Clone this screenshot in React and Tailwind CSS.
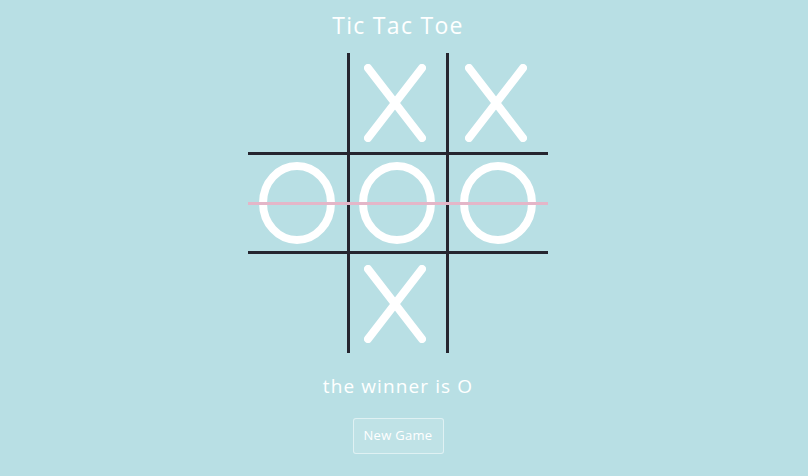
import React from 'react';

const board = ['', 'X', 'X', 'O', 'O', 'O', '', 'X', ''];
const colW = ['w-[102px]', 'w-[99px]', 'w-[99px]'];
const rowH = ['h-[102px]', 'h-[99px]', 'h-[99px]'];

function MarkX() {
  return (
    <svg width="62" height="78" viewBox="0 0 62 78" className="-translate-x-[3px]">
      <line x1="4" y1="4" x2="58" y2="74" stroke="white" strokeWidth="8" strokeLinecap="round" />
      <line x1="58" y1="4" x2="4" y2="74" stroke="white" strokeWidth="8" strokeLinecap="round" />
    </svg>
  );
}

function MarkO() {
  return (
    <svg width="76" height="82" viewBox="0 0 76 82" className="-translate-x-[1px]">
      <ellipse cx="38" cy="41" rx="34" ry="37" fill="none" stroke="white" strokeWidth="8" />
    </svg>
  );
}

function Cell({ value, index }) {
  const col = index % 3;
  const row = Math.floor(index / 3);
  const right = col < 2 ? 'border-r-[3px]' : '';
  const bottom = row < 2 ? 'border-b-[3px]' : '';
  return (
    <div
      className={`${colW[col]} ${rowH[row]} ${right} ${bottom} border-[#25252f] flex items-center justify-center`}
    >
      {value === 'X' && <MarkX />}
      {value === 'O' && <MarkO />}
    </div>
  );
}

export default function App() {
  return (
    <div
      className="w-full h-[476px] bg-[#b8dfe4] flex flex-col items-center pr-[12px] text-white"
      style={{ fontFamily: '"Open Sans", "Liberation Sans", sans-serif' }}
    >
      <div className="h-[53px] flex items-center justify-center">
        <h1 className="text-[23px] leading-[28px] tracking-[1.3px] -translate-y-[2px]">Tic Tac Toe</h1>
      </div>

      <div className="relative w-[300px] h-[300px] flex flex-wrap">
        {board.map((v, i) => (
          <Cell key={i} value={v} index={i} />
        ))}
        <div className="absolute left-0 right-0 top-[149px] h-[3px] bg-[#e4b6c8]" />
      </div>

      <p className="mt-[21px] text-[19px] leading-[24px] tracking-[1.1px]">the winner is O</p>

      <button className="mt-[20px] w-[91px] h-[36px] rounded-[3px] border border-white/50 bg-white/10 text-[13px] tracking-[0.3px] text-white">
        New Game
      </button>
    </div>
  );
}
